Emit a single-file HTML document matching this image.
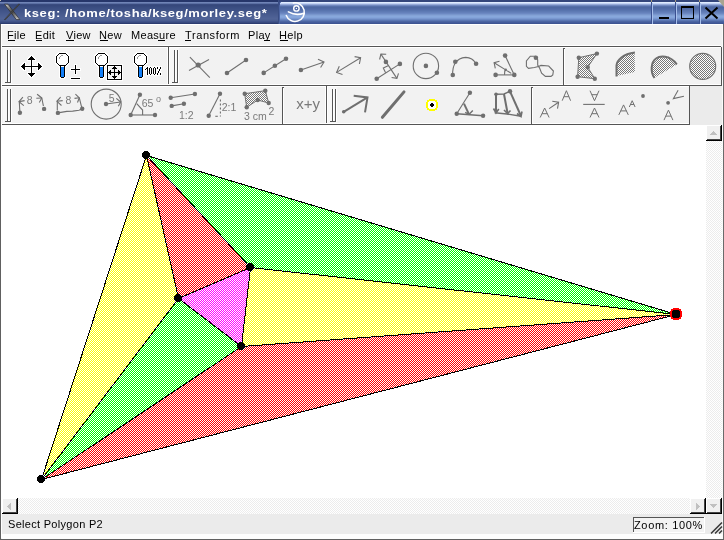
<!DOCTYPE html>
<html><head><meta charset="utf-8">
<style>
html,body{margin:0;padding:0;}
body{width:724px;height:540px;overflow:hidden;position:relative;background:#f2f2f2;font-family:"Liberation Sans",sans-serif;}
svg{position:absolute;left:0;top:0;will-change:transform;}
.t{position:absolute;white-space:nowrap;line-height:1;will-change:transform;}
.menu{font-size:11px;letter-spacing:0.3px;color:#000;top:30px;}
.menu u{text-decoration:none;border-bottom:1px solid #000;}
</style></head><body>
<svg width="724" height="540" viewBox="0 0 724 540" shape-rendering="crispEdges">
<defs>
<linearGradient id="tg" x1="0" y1="0" x2="0" y2="1">
<stop offset="0" stop-color="#6a84ba"/>
<stop offset="0.5" stop-color="#5069a2"/>
<stop offset="1" stop-color="#3b5089"/>
</linearGradient>
<pattern id="pY" x="0" y="0" width="2" height="2" patternUnits="userSpaceOnUse"><rect width="2" height="2" fill="#fff"/><rect x="1" y="0" width="1" height="1" fill="#ff0"/><rect x="0" y="1" width="1" height="1" fill="#ff0"/></pattern>
<pattern id="pR" x="0" y="0" width="2" height="2" patternUnits="userSpaceOnUse"><rect width="2" height="2" fill="#fff"/><rect x="1" y="0" width="1" height="1" fill="#f00"/><rect x="0" y="1" width="1" height="1" fill="#f00"/></pattern>
<pattern id="pG" x="0" y="0" width="2" height="2" patternUnits="userSpaceOnUse"><rect width="2" height="2" fill="#fff"/><rect x="1" y="0" width="1" height="1" fill="#0f0"/><rect x="0" y="1" width="1" height="1" fill="#0f0"/></pattern>
<pattern id="pM" x="0" y="0" width="2" height="2" patternUnits="userSpaceOnUse"><rect width="2" height="2" fill="#fff"/><rect x="1" y="0" width="1" height="1" fill="#f0f"/><rect x="0" y="1" width="1" height="1" fill="#f0f"/></pattern>
<pattern id="pS" x="0" y="0" width="2" height="2" patternUnits="userSpaceOnUse"><rect width="2" height="2" fill="#fff"/><rect x="0" y="0" width="1" height="1" fill="#ececec"/><rect x="1" y="1" width="1" height="1" fill="#ececec"/></pattern>
</defs>
<!-- title bar -->
<linearGradient id="tgL" x1="0" y1="0" x2="0" y2="24" gradientUnits="userSpaceOnUse">
<stop offset="0" stop-color="#26366a"/><stop offset="0.083" stop-color="#26366a"/>
<stop offset="0.084" stop-color="#6c80b4"/><stop offset="0.125" stop-color="#6c80b4"/>
<stop offset="0.126" stop-color="#56699e"/><stop offset="0.17" stop-color="#3e5086"/>
<stop offset="0.5" stop-color="#44588e"/><stop offset="0.8" stop-color="#52679c"/>
<stop offset="0.9" stop-color="#40538a"/><stop offset="0.958" stop-color="#34467a"/>
<stop offset="1" stop-color="#2c3d72"/>
</linearGradient>
<linearGradient id="tgR" x1="0" y1="0" x2="0" y2="24" gradientUnits="userSpaceOnUse">
<stop offset="0" stop-color="#30427a"/><stop offset="0.083" stop-color="#30427a"/>
<stop offset="0.084" stop-color="#d8e6ff"/><stop offset="0.125" stop-color="#d8e6ff"/>
<stop offset="0.17" stop-color="#a8bce8"/><stop offset="0.25" stop-color="#5e78b4"/>
<stop offset="0.33" stop-color="#4e68a4"/><stop offset="0.6" stop-color="#7894cc"/>
<stop offset="0.7" stop-color="#88a8dc"/><stop offset="0.8" stop-color="#6c8cc4"/>
<stop offset="0.9" stop-color="#4a64a0"/><stop offset="1" stop-color="#3e5592"/>
</linearGradient>
<rect x="0" y="0" width="278" height="1" fill="#26366a"/><rect x="0" y="1" width="278" height="1" fill="#26366a"/><rect x="0" y="2" width="278" height="1" fill="#7084b6"/><rect x="0" y="3" width="278" height="1" fill="#5c70a4"/><rect x="0" y="4" width="278" height="1" fill="#3a4c80"/><rect x="0" y="5" width="278" height="1" fill="#36487c"/><rect x="0" y="6" width="278" height="1" fill="#384a7e"/><rect x="0" y="7" width="278" height="1" fill="#3a4d81"/><rect x="0" y="8" width="278" height="1" fill="#3c4f83"/><rect x="0" y="9" width="278" height="1" fill="#3e5185"/><rect x="0" y="10" width="278" height="1" fill="#405387"/><rect x="0" y="11" width="278" height="1" fill="#425589"/><rect x="0" y="12" width="278" height="1" fill="#44578b"/><rect x="0" y="13" width="278" height="1" fill="#46598d"/><rect x="0" y="14" width="278" height="1" fill="#485b8f"/><rect x="0" y="15" width="278" height="1" fill="#4a5d91"/><rect x="0" y="16" width="278" height="1" fill="#4c5f93"/><rect x="0" y="17" width="278" height="1" fill="#4e6195"/><rect x="0" y="18" width="278" height="1" fill="#506396"/><rect x="0" y="19" width="278" height="1" fill="#4e6194"/><rect x="0" y="20" width="278" height="1" fill="#4a5d90"/><rect x="0" y="21" width="278" height="1" fill="#40538a"/><rect x="0" y="22" width="278" height="1" fill="#384a7e"/><rect x="0" y="23" width="278" height="1" fill="#2c3c70"/><rect x="279" y="0" width="445" height="1" fill="#34467c"/><rect x="279" y="1" width="445" height="1" fill="#34467c"/><rect x="279" y="2" width="445" height="1" fill="#e0ecff"/><rect x="279" y="3" width="445" height="1" fill="#c4d4f6"/><rect x="279" y="4" width="445" height="1" fill="#96aad8"/><rect x="279" y="5" width="445" height="1" fill="#7088c0"/><rect x="279" y="6" width="445" height="1" fill="#5670aa"/><rect x="279" y="7" width="445" height="1" fill="#4e68a2"/><rect x="279" y="8" width="445" height="1" fill="#506aa6"/><rect x="279" y="9" width="445" height="1" fill="#546eaa"/><rect x="279" y="10" width="445" height="1" fill="#5874ae"/><rect x="279" y="11" width="445" height="1" fill="#5e7ab4"/><rect x="279" y="12" width="445" height="1" fill="#6480ba"/><rect x="279" y="13" width="445" height="1" fill="#6c88c2"/><rect x="279" y="14" width="445" height="1" fill="#7896cc"/><rect x="279" y="15" width="445" height="1" fill="#84a2d6"/><rect x="279" y="16" width="445" height="1" fill="#88a8dc"/><rect x="279" y="17" width="445" height="1" fill="#84a4da"/><rect x="279" y="18" width="445" height="1" fill="#7a98d0"/><rect x="279" y="19" width="445" height="1" fill="#6a88c2"/><rect x="279" y="20" width="445" height="1" fill="#5a76b2"/><rect x="279" y="21" width="445" height="1" fill="#4c66a2"/><rect x="279" y="22" width="445" height="1" fill="#445c9c"/><rect x="279" y="23" width="445" height="1" fill="#3e5592"/>
<rect x="279" y="2" width="1" height="22" fill="#4c64a2"/><rect x="280" y="2" width="1" height="1" fill="#6a82bc"/>
<rect x="278" y="0" width="1" height="24" fill="#3a4e84"/>
<rect x="279" y="2" width="1" height="3" fill="#3e5290"/>
<rect x="0" y="0" width="1" height="1" fill="#c8c0b0"/>
<!-- X logo -->
<g shape-rendering="geometricPrecision">
<linearGradient id="xg" x1="0" y1="0" x2="1" y2="1"><stop offset="0" stop-color="#d8d8d8"/><stop offset="0.5" stop-color="#404040"/><stop offset="1" stop-color="#e0e0e0"/></linearGradient>
<path d="M4.5,4.2 L8,4.2 L19.8,19.6 L16.3,19.6 Z" fill="url(#xg)" stroke="#2a2a2a" stroke-width="0.7"/>
<path d="M19.6,4.2 L18.4,4.2 L4.4,19.6 L5.6,19.6 Z" fill="#606060" stroke="#2a2a2a" stroke-width="0.6"/>
</g>
<!-- KDE logo -->
<g shape-rendering="geometricPrecision" fill="none" stroke="#fff" stroke-linecap="round">
<circle cx="296.4" cy="8.4" r="2.7" stroke-width="1.4"/>
<circle cx="296.4" cy="8.4" r="0.7" fill="#fff" stroke="none"/>
<path d="M293.4,3.0 A9.3,9.3 0 1 1 286.3,15.4" stroke-width="1.5"/>
<path d="M288.4,11.9 Q296,16 304,13.2" stroke-width="1.6"/>
</g>
<!-- title buttons -->
<g>
<rect x="651" y="2" width="1" height="22" fill="#3a5090"/><rect x="652" y="3" width="1" height="21" fill="#a8c0ec"/>
<rect x="675" y="2" width="1" height="22" fill="#3a5090"/><rect x="676" y="3" width="1" height="21" fill="#a8c0ec"/>
<rect x="699" y="2" width="1" height="22" fill="#3a5090"/><rect x="700" y="3" width="1" height="21" fill="#a8c0ec"/>
<rect x="651" y="0" width="1" height="2" fill="#a89c80"/><rect x="675" y="0" width="1" height="2" fill="#a89c80"/><rect x="699" y="0" width="1" height="2" fill="#a89c80"/>
<path d="M718,0 L724,0 L724,7 Z" fill="#a8a490" shape-rendering="geometricPrecision"/>
<rect x="659" y="17" width="10" height="2" fill="#000"/>
<rect x="681" y="6" width="13" height="2" fill="#000"/><rect x="681" y="18" width="13" height="1" fill="#000"/><rect x="681" y="8" width="1" height="10" fill="#000"/><rect x="693" y="8" width="1" height="10" fill="#000"/>
<path d="M705.5,7.5 L717.5,18.5 M717.5,7.5 L705.5,18.5" stroke="#000" stroke-width="2" shape-rendering="geometricPrecision"/>
</g>
<!-- window frame -->
<rect x="0" y="24" width="1" height="516" fill="#606060"/>
<rect x="1" y="24" width="722" height="1" fill="#fff"/>
<rect x="1" y="24" width="1" height="514" fill="#fff"/>
<rect x="723" y="24" width="1" height="516" fill="#6a6a6a"/>
<rect x="722" y="24" width="1" height="515" fill="#fafafa"/>
<rect x="0" y="539" width="724" height="1" fill="#606060"/>
<!-- menu separator / toolbar frames -->
<rect x="2" y="45" width="719" height="1" fill="#fff"/>
<rect x="2" y="46" width="719" height="1" fill="#555"/>
<rect x="2" y="47" width="719" height="1" fill="#fff"/>
<rect x="721" y="47" width="1" height="38" fill="#555"/>
<rect x="168" y="47" width="1" height="38" fill="#555"/>
<rect x="167" y="48" width="1" height="36" fill="#fff"/>
<rect x="169" y="47" width="1" height="38" fill="#fff"/>
<rect x="2" y="84" width="719" height="1" fill="#fff"/>
<rect x="2" y="85" width="720" height="1" fill="#555"/>
<rect x="2" y="86" width="688" height="1" fill="#fff"/>
<rect x="690" y="86" width="32" height="39" fill="#ebebeb"/>
<rect x="326" y="86" width="1" height="38" fill="#555"/>
<rect x="327" y="86" width="1" height="38" fill="#fff"/>
<rect x="325" y="87" width="1" height="36" fill="#fff"/>
<rect x="689" y="86" width="1" height="38" fill="#555"/>
<rect x="2" y="123" width="687" height="1" fill="#fff"/>
<rect x="2" y="124" width="688" height="1" fill="#555"/>
<!-- separators with tick -->
<rect x="563" y="48" width="2" height="1" fill="#555"/><rect x="563" y="48" width="1" height="37" fill="#555"/><rect x="564" y="49" width="1" height="36" fill="#fff"/>
<rect x="282" y="87" width="2" height="1" fill="#555"/><rect x="282" y="87" width="1" height="37" fill="#555"/><rect x="283" y="88" width="1" height="36" fill="#fff"/>
<rect x="531" y="87" width="2" height="1" fill="#555"/><rect x="531" y="87" width="1" height="37" fill="#555"/><rect x="532" y="88" width="1" height="36" fill="#fff"/>
<!-- handles -->
<g fill="#f7f7f7"><rect x="3" y="48" width="9" height="36"/><rect x="170" y="48" width="9" height="36"/><rect x="3" y="87" width="9" height="36"/><rect x="328" y="87" width="9" height="36"/></g>
<g fill="#555">
<rect x="7" y="50" width="1" height="33"/><rect x="10" y="50" width="1" height="33"/><rect x="5" y="82" width="6" height="1"/>
<rect x="174" y="50" width="1" height="33"/><rect x="177" y="50" width="1" height="33"/><rect x="172" y="82" width="6" height="1"/>
<rect x="7" y="89" width="1" height="33"/><rect x="10" y="89" width="1" height="33"/><rect x="5" y="121" width="6" height="1"/>
<rect x="332" y="89" width="1" height="33"/><rect x="335" y="89" width="1" height="33"/><rect x="330" y="121" width="6" height="1"/>
</g>
<g fill="#fff">
<rect x="8" y="50" width="1" height="32"/><rect x="11" y="50" width="1" height="33"/>
<rect x="175" y="50" width="1" height="32"/><rect x="178" y="50" width="1" height="33"/>
<rect x="8" y="89" width="1" height="32"/><rect x="11" y="89" width="1" height="33"/>
<rect x="333" y="89" width="1" height="32"/><rect x="336" y="89" width="1" height="33"/>
</g>
<!-- canvas -->
<rect x="2" y="125" width="704" height="373" fill="#fff"/>
<g shape-rendering="crispEdges" stroke="#000" stroke-width="1">
<polygon points="146.5,155.5 178.5,298.5 41.5,479.5" fill="url(#pY)"/>
<polygon points="146.5,155.5 250.5,267.5 178.5,298.5" fill="url(#pR)"/>
<polygon points="146.5,155.5 676.5,314.5 250.5,267.5" fill="url(#pG)"/>
<polygon points="250.5,267.5 676.5,314.5 241.5,346.5" fill="url(#pY)"/>
<polygon points="241.5,346.5 676.5,314.5 41.5,479.5" fill="url(#pR)"/>
<polygon points="178.5,298.5 241.5,346.5 41.5,479.5" fill="url(#pG)"/>
<polygon points="250.5,267.5 241.5,346.5 178.5,298.5" fill="url(#pM)"/>
</g>
<g fill="#000">
<circle cx="146" cy="155" r="4"/>
<circle cx="41" cy="479" r="4"/>
<circle cx="250" cy="267" r="4"/>
<circle cx="178" cy="298" r="4"/>
<circle cx="241" cy="346" r="4"/>
<path fill="#f00" d="M673,308h6v1h-6zM671,309h10v1h-10zM671,310h10v1h-10zM670,311h12v6h-12zM671,317h10v1h-10zM671,318h10v1h-10zM673,319h6v1h-6z"/>
<path fill="#000" d="M673,310h6v1h-6zM672,311h8v6h-8zM673,317h6v1h-6z"/>
</g>
<!-- scrollbars -->
<rect x="706" y="125" width="16" height="389" fill="url(#pS)"/>
<rect x="2" y="498" width="704" height="16" fill="url(#pS)"/>
<g id="btns">
<!-- up -->
<rect x="706" y="125" width="16" height="16" fill="#fff"/><rect x="707" y="126" width="13" height="13" fill="#f0f0f0"/>
<rect x="721" y="125" width="1" height="16" fill="#000"/><rect x="720" y="126" width="1" height="14" fill="#444"/>
<rect x="706" y="140" width="16" height="1" fill="#000"/><rect x="707" y="139" width="14" height="1" fill="#444"/>
<path fill="#c0c0c0" d="M713,131h1v1h-1zM712,132h3v1h-3zM711,133h5v1h-5zM710,134h7v1h-7z"/>
<!-- left -->
<rect x="2" y="498" width="16" height="16" fill="#fff"/><rect x="3" y="499" width="13" height="13" fill="#f0f0f0"/>
<rect x="17" y="498" width="1" height="16" fill="#000"/><rect x="16" y="499" width="1" height="14" fill="#444"/>
<rect x="2" y="513" width="16" height="1" fill="#000"/><rect x="3" y="512" width="14" height="1" fill="#444"/>
<path fill="#c0c0c0" d="M7,506h1v1h-1zM8,505h1v3h-1zM9,504h1v5h-1zM10,503h1v7h-1z"/>
<!-- right -->
<rect x="690" y="498" width="16" height="16" fill="#fff"/><rect x="691" y="499" width="13" height="13" fill="#f0f0f0"/>
<rect x="705" y="498" width="1" height="16" fill="#000"/><rect x="704" y="499" width="1" height="14" fill="#444"/>
<rect x="690" y="513" width="16" height="1" fill="#000"/><rect x="691" y="512" width="14" height="1" fill="#444"/>
<path fill="#c0c0c0" d="M696,503h1v7h-1zM697,504h1v5h-1zM698,505h1v3h-1zM699,506h1v1h-1z"/>
<!-- down -->
<rect x="706" y="498" width="16" height="16" fill="#fff"/><rect x="707" y="499" width="13" height="13" fill="#f0f0f0"/>
<rect x="721" y="498" width="1" height="16" fill="#000"/><rect x="720" y="499" width="1" height="14" fill="#444"/>
<rect x="706" y="513" width="16" height="1" fill="#000"/><rect x="707" y="512" width="14" height="1" fill="#444"/>
<path fill="#c0c0c0" d="M710,504h7v1h-7zM711,505h5v1h-5zM712,506h3v1h-3zM713,507h1v1h-1z"/>
</g>
<!-- status bar -->
<rect x="2" y="514" width="720" height="20" fill="#ebebeb"/>
<rect x="2" y="534" width="720" height="5" fill="#fdfdfd"/>
<rect x="633" y="517" width="71" height="15" fill="#f3f3f3"/>
<rect x="633" y="517" width="71" height="1" fill="#555"/>
<rect x="633" y="517" width="1" height="15" fill="#555"/>
<rect x="704" y="517" width="1" height="16" fill="#fff"/>
<rect x="633" y="532" width="72" height="1" fill="#fff"/>
<!-- size grip -->
<g shape-rendering="geometricPrecision" stroke-linecap="butt">
<path d="M711,533.5 L722,522.5 M715,533.5 L722,526.5 M719,533.5 L722,530.5" stroke="#fff" stroke-width="1.2" transform="translate(-0.8,0.8)"/>
<path d="M711,533.5 L722,522.5 M715,533.5 L722,526.5 M719,533.5 L722,530.5" stroke="#3a3a3a" stroke-width="1.6"/>
</g>
<!--UL--><g fill="#000"><rect x="8" y="40" width="7" height="1"/><rect x="36" y="40" width="6" height="1"/><rect x="66" y="40" width="8" height="1"/><rect x="100" y="40" width="8" height="1"/><rect x="158" y="40" width="7" height="1"/><rect x="185" y="40" width="6" height="1"/><rect x="264" y="40" width="6" height="1"/><rect x="280" y="40" width="8" height="1"/></g>
<!--ICONS-->
<path fill="#fff" d="M20,65h1v1h-1zM20,66h1v1h-1zM20,67h1v1h-1zM21,64h1v1h-1zM21,65h1v1h-1zM21,67h1v1h-1zM21,68h1v1h-1zM22,63h1v1h-1zM22,64h1v1h-1zM22,68h1v1h-1zM22,69h1v1h-1zM23,62h1v1h-1zM23,63h1v1h-1zM23,69h1v1h-1zM23,70h1v1h-1zM24,62h1v1h-1zM24,70h1v1h-1zM25,62h1v1h-1zM25,63h1v1h-1zM25,64h1v1h-1zM25,65h1v1h-1zM25,67h1v1h-1zM25,68h1v1h-1zM25,69h1v1h-1zM25,70h1v1h-1zM26,65h1v1h-1zM26,67h1v1h-1zM27,58h1v1h-1zM27,59h1v1h-1zM27,60h1v1h-1zM27,65h1v1h-1zM27,67h1v1h-1zM27,72h1v1h-1zM27,73h1v1h-1zM27,74h1v1h-1zM28,57h1v1h-1zM28,58h1v1h-1zM28,60h1v1h-1zM28,65h1v1h-1zM28,67h1v1h-1zM28,72h1v1h-1zM28,74h1v1h-1zM28,75h1v1h-1zM29,56h1v1h-1zM29,57h1v1h-1zM29,60h1v1h-1zM29,65h1v1h-1zM29,67h1v1h-1zM29,72h1v1h-1zM29,75h1v1h-1zM29,76h1v1h-1zM30,55h1v1h-1zM30,56h1v1h-1zM30,60h1v1h-1zM30,61h1v1h-1zM30,62h1v1h-1zM30,63h1v1h-1zM30,64h1v1h-1zM30,65h1v1h-1zM30,67h1v1h-1zM30,68h1v1h-1zM30,69h1v1h-1zM30,70h1v1h-1zM30,71h1v1h-1zM30,72h1v1h-1zM30,76h1v1h-1zM30,77h1v1h-1zM31,55h1v1h-1zM31,77h1v1h-1zM32,55h1v1h-1zM32,56h1v1h-1zM32,60h1v1h-1zM32,61h1v1h-1zM32,62h1v1h-1zM32,63h1v1h-1zM32,64h1v1h-1zM32,65h1v1h-1zM32,67h1v1h-1zM32,68h1v1h-1zM32,69h1v1h-1zM32,70h1v1h-1zM32,71h1v1h-1zM32,72h1v1h-1zM32,76h1v1h-1zM32,77h1v1h-1zM33,56h1v1h-1zM33,57h1v1h-1zM33,60h1v1h-1zM33,65h1v1h-1zM33,67h1v1h-1zM33,72h1v1h-1zM33,75h1v1h-1zM33,76h1v1h-1zM34,57h1v1h-1zM34,58h1v1h-1zM34,60h1v1h-1zM34,65h1v1h-1zM34,67h1v1h-1zM34,72h1v1h-1zM34,74h1v1h-1zM34,75h1v1h-1zM35,58h1v1h-1zM35,59h1v1h-1zM35,60h1v1h-1zM35,65h1v1h-1zM35,67h1v1h-1zM35,72h1v1h-1zM35,73h1v1h-1zM35,74h1v1h-1zM36,65h1v1h-1zM36,67h1v1h-1zM37,62h1v1h-1zM37,63h1v1h-1zM37,64h1v1h-1zM37,65h1v1h-1zM37,67h1v1h-1zM37,68h1v1h-1zM37,69h1v1h-1zM37,70h1v1h-1zM38,62h1v1h-1zM38,70h1v1h-1zM39,62h1v1h-1zM39,63h1v1h-1zM39,69h1v1h-1zM39,70h1v1h-1zM40,63h1v1h-1zM40,64h1v1h-1zM40,68h1v1h-1zM40,69h1v1h-1zM41,64h1v1h-1zM41,65h1v1h-1zM41,67h1v1h-1zM41,68h1v1h-1zM42,65h1v1h-1zM42,66h1v1h-1zM42,67h1v1h-1z"/><path fill="#000" d="M21,66h1v1h-1zM22,65h1v1h-1zM22,66h1v1h-1zM22,67h1v1h-1zM23,64h1v1h-1zM23,65h1v1h-1zM23,66h1v1h-1zM23,67h1v1h-1zM23,68h1v1h-1zM24,63h1v1h-1zM24,64h1v1h-1zM24,65h1v1h-1zM24,66h1v1h-1zM24,67h1v1h-1zM24,68h1v1h-1zM24,69h1v1h-1zM25,66h1v1h-1zM26,66h1v1h-1zM27,66h1v1h-1zM28,59h1v1h-1zM28,66h1v1h-1zM28,73h1v1h-1zM29,58h1v1h-1zM29,59h1v1h-1zM29,66h1v1h-1zM29,73h1v1h-1zM29,74h1v1h-1zM30,57h1v1h-1zM30,58h1v1h-1zM30,59h1v1h-1zM30,66h1v1h-1zM30,73h1v1h-1zM30,74h1v1h-1zM30,75h1v1h-1zM31,56h1v1h-1zM31,57h1v1h-1zM31,58h1v1h-1zM31,59h1v1h-1zM31,60h1v1h-1zM31,61h1v1h-1zM31,62h1v1h-1zM31,63h1v1h-1zM31,64h1v1h-1zM31,65h1v1h-1zM31,66h1v1h-1zM31,67h1v1h-1zM31,68h1v1h-1zM31,69h1v1h-1zM31,70h1v1h-1zM31,71h1v1h-1zM31,72h1v1h-1zM31,73h1v1h-1zM31,74h1v1h-1zM31,75h1v1h-1zM31,76h1v1h-1zM32,57h1v1h-1zM32,58h1v1h-1zM32,59h1v1h-1zM32,66h1v1h-1zM32,73h1v1h-1zM32,74h1v1h-1zM32,75h1v1h-1zM33,58h1v1h-1zM33,59h1v1h-1zM33,66h1v1h-1zM33,73h1v1h-1zM33,74h1v1h-1zM34,59h1v1h-1zM34,66h1v1h-1zM34,73h1v1h-1zM35,66h1v1h-1zM36,66h1v1h-1zM37,66h1v1h-1zM38,63h1v1h-1zM38,64h1v1h-1zM38,65h1v1h-1zM38,66h1v1h-1zM38,67h1v1h-1zM38,68h1v1h-1zM38,69h1v1h-1zM39,64h1v1h-1zM39,65h1v1h-1zM39,66h1v1h-1zM39,67h1v1h-1zM39,68h1v1h-1zM40,65h1v1h-1zM40,66h1v1h-1zM40,67h1v1h-1zM41,66h1v1h-1z"/>
<path fill="#fff" d="M55,55h1v1h-1zM55,56h1v1h-1zM55,57h1v1h-1zM55,58h1v1h-1zM55,59h1v1h-1zM55,60h1v1h-1zM55,61h1v1h-1zM55,62h1v1h-1zM55,63h1v1h-1zM56,54h1v1h-1zM56,55h1v1h-1zM56,63h1v1h-1zM56,64h1v1h-1zM57,53h1v1h-1zM57,54h1v1h-1zM57,56h1v1h-1zM57,57h1v1h-1zM57,58h1v1h-1zM57,59h1v1h-1zM57,60h1v1h-1zM57,61h1v1h-1zM57,62h1v1h-1zM57,64h1v1h-1zM57,65h1v1h-1zM58,52h1v1h-1zM58,53h1v1h-1zM58,55h1v1h-1zM58,56h1v1h-1zM58,62h1v1h-1zM58,63h1v1h-1zM58,65h1v1h-1zM58,66h1v1h-1zM59,52h1v1h-1zM59,54h1v1h-1zM59,55h1v1h-1zM59,63h1v1h-1zM59,64h1v1h-1zM59,66h1v1h-1zM59,67h1v1h-1zM59,68h1v1h-1zM59,69h1v1h-1zM59,70h1v1h-1zM59,71h1v1h-1zM59,72h1v1h-1zM59,73h1v1h-1zM59,74h1v1h-1zM59,75h1v1h-1zM59,76h1v1h-1zM59,77h1v1h-1zM60,52h1v1h-1zM60,54h1v1h-1zM60,64h1v1h-1zM60,77h1v1h-1zM60,78h1v1h-1zM61,52h1v1h-1zM61,54h1v1h-1zM61,64h1v1h-1zM61,66h1v1h-1zM61,67h1v1h-1zM61,68h1v1h-1zM61,69h1v1h-1zM61,70h1v1h-1zM61,71h1v1h-1zM61,72h1v1h-1zM61,73h1v1h-1zM61,74h1v1h-1zM61,75h1v1h-1zM61,76h1v1h-1zM61,78h1v1h-1zM62,52h1v1h-1zM62,54h1v1h-1zM62,64h1v1h-1zM62,66h1v1h-1zM62,76h1v1h-1zM62,78h1v1h-1zM63,52h1v1h-1zM63,54h1v1h-1zM63,64h1v1h-1zM63,66h1v1h-1zM63,67h1v1h-1zM63,68h1v1h-1zM63,69h1v1h-1zM63,70h1v1h-1zM63,71h1v1h-1zM63,72h1v1h-1zM63,73h1v1h-1zM63,74h1v1h-1zM63,75h1v1h-1zM63,76h1v1h-1zM63,78h1v1h-1zM64,52h1v1h-1zM64,54h1v1h-1zM64,64h1v1h-1zM64,77h1v1h-1zM64,78h1v1h-1zM65,52h1v1h-1zM65,54h1v1h-1zM65,55h1v1h-1zM65,63h1v1h-1zM65,64h1v1h-1zM65,66h1v1h-1zM65,67h1v1h-1zM65,68h1v1h-1zM65,69h1v1h-1zM65,70h1v1h-1zM65,71h1v1h-1zM65,72h1v1h-1zM65,73h1v1h-1zM65,74h1v1h-1zM65,75h1v1h-1zM65,76h1v1h-1zM65,77h1v1h-1zM66,52h1v1h-1zM66,53h1v1h-1zM66,55h1v1h-1zM66,56h1v1h-1zM66,62h1v1h-1zM66,63h1v1h-1zM66,65h1v1h-1zM66,66h1v1h-1zM67,53h1v1h-1zM67,54h1v1h-1zM67,56h1v1h-1zM67,57h1v1h-1zM67,58h1v1h-1zM67,59h1v1h-1zM67,60h1v1h-1zM67,61h1v1h-1zM67,62h1v1h-1zM67,64h1v1h-1zM67,65h1v1h-1zM68,54h1v1h-1zM68,55h1v1h-1zM68,63h1v1h-1zM68,64h1v1h-1zM69,55h1v1h-1zM69,56h1v1h-1zM69,57h1v1h-1zM69,58h1v1h-1zM69,59h1v1h-1zM69,60h1v1h-1zM69,61h1v1h-1zM69,62h1v1h-1zM69,63h1v1h-1z"/>
<rect x="57" y="54" width="11" height="11" fill="#fff"/><rect x="56" y="56" width="13" height="7" fill="#fff"/><rect x="59" y="53" width="7" height="13" fill="#fff"/>
<rect x="61" y="67" width="3" height="10" fill="#1480f8"/><rect x="61" y="66" width="3" height="1" fill="#fff"/>
<path fill="#000" d="M56,56h1v1h-1zM56,57h1v1h-1zM56,58h1v1h-1zM56,59h1v1h-1zM56,60h1v1h-1zM56,61h1v1h-1zM56,62h1v1h-1zM57,55h1v1h-1zM57,63h1v1h-1zM58,54h1v1h-1zM58,64h1v1h-1zM59,53h1v1h-1zM59,65h1v1h-1zM60,53h1v1h-1zM60,65h1v1h-1zM60,66h1v1h-1zM60,67h1v1h-1zM60,68h1v1h-1zM60,69h1v1h-1zM60,70h1v1h-1zM60,71h1v1h-1zM60,72h1v1h-1zM60,73h1v1h-1zM60,74h1v1h-1zM60,75h1v1h-1zM60,76h1v1h-1zM61,53h1v1h-1zM61,65h1v1h-1zM61,77h1v1h-1zM62,53h1v1h-1zM62,65h1v1h-1zM62,77h1v1h-1zM63,53h1v1h-1zM63,65h1v1h-1zM63,77h1v1h-1zM64,53h1v1h-1zM64,65h1v1h-1zM64,66h1v1h-1zM64,67h1v1h-1zM64,68h1v1h-1zM64,69h1v1h-1zM64,70h1v1h-1zM64,71h1v1h-1zM64,72h1v1h-1zM64,73h1v1h-1zM64,74h1v1h-1zM64,75h1v1h-1zM64,76h1v1h-1zM65,53h1v1h-1zM65,65h1v1h-1zM66,54h1v1h-1zM66,64h1v1h-1zM67,55h1v1h-1zM67,63h1v1h-1zM68,56h1v1h-1zM68,57h1v1h-1zM68,58h1v1h-1zM68,59h1v1h-1zM68,60h1v1h-1zM68,61h1v1h-1zM68,62h1v1h-1z"/>
<path fill="#999" d="M61,55h2v1h-2zM60,56h1v1h-1zM59,57h1v2h-1z"/>
<path fill="#fff" d="M94,55h1v1h-1zM94,56h1v1h-1zM94,57h1v1h-1zM94,58h1v1h-1zM94,59h1v1h-1zM94,60h1v1h-1zM94,61h1v1h-1zM94,62h1v1h-1zM94,63h1v1h-1zM95,54h1v1h-1zM95,55h1v1h-1zM95,63h1v1h-1zM95,64h1v1h-1zM96,53h1v1h-1zM96,54h1v1h-1zM96,56h1v1h-1zM96,57h1v1h-1zM96,58h1v1h-1zM96,59h1v1h-1zM96,60h1v1h-1zM96,61h1v1h-1zM96,62h1v1h-1zM96,64h1v1h-1zM96,65h1v1h-1zM97,52h1v1h-1zM97,53h1v1h-1zM97,55h1v1h-1zM97,56h1v1h-1zM97,62h1v1h-1zM97,63h1v1h-1zM97,65h1v1h-1zM97,66h1v1h-1zM98,52h1v1h-1zM98,54h1v1h-1zM98,55h1v1h-1zM98,63h1v1h-1zM98,64h1v1h-1zM98,66h1v1h-1zM98,67h1v1h-1zM98,68h1v1h-1zM98,69h1v1h-1zM98,70h1v1h-1zM98,71h1v1h-1zM98,72h1v1h-1zM98,73h1v1h-1zM98,74h1v1h-1zM98,75h1v1h-1zM98,76h1v1h-1zM98,77h1v1h-1zM99,52h1v1h-1zM99,54h1v1h-1zM99,64h1v1h-1zM99,77h1v1h-1zM99,78h1v1h-1zM100,52h1v1h-1zM100,54h1v1h-1zM100,64h1v1h-1zM100,66h1v1h-1zM100,67h1v1h-1zM100,68h1v1h-1zM100,69h1v1h-1zM100,70h1v1h-1zM100,71h1v1h-1zM100,72h1v1h-1zM100,73h1v1h-1zM100,74h1v1h-1zM100,75h1v1h-1zM100,76h1v1h-1zM100,78h1v1h-1zM101,52h1v1h-1zM101,54h1v1h-1zM101,64h1v1h-1zM101,66h1v1h-1zM101,76h1v1h-1zM101,78h1v1h-1zM102,52h1v1h-1zM102,54h1v1h-1zM102,64h1v1h-1zM102,66h1v1h-1zM102,67h1v1h-1zM102,68h1v1h-1zM102,69h1v1h-1zM102,70h1v1h-1zM102,71h1v1h-1zM102,72h1v1h-1zM102,73h1v1h-1zM102,74h1v1h-1zM102,75h1v1h-1zM102,76h1v1h-1zM102,78h1v1h-1zM103,52h1v1h-1zM103,54h1v1h-1zM103,64h1v1h-1zM103,77h1v1h-1zM103,78h1v1h-1zM104,52h1v1h-1zM104,54h1v1h-1zM104,55h1v1h-1zM104,63h1v1h-1zM104,64h1v1h-1zM104,66h1v1h-1zM104,67h1v1h-1zM104,68h1v1h-1zM104,69h1v1h-1zM104,70h1v1h-1zM104,71h1v1h-1zM104,72h1v1h-1zM104,73h1v1h-1zM104,74h1v1h-1zM104,75h1v1h-1zM104,76h1v1h-1zM104,77h1v1h-1zM105,52h1v1h-1zM105,53h1v1h-1zM105,55h1v1h-1zM105,56h1v1h-1zM105,62h1v1h-1zM105,63h1v1h-1zM105,65h1v1h-1zM105,66h1v1h-1zM106,53h1v1h-1zM106,54h1v1h-1zM106,56h1v1h-1zM106,57h1v1h-1zM106,58h1v1h-1zM106,59h1v1h-1zM106,60h1v1h-1zM106,61h1v1h-1zM106,62h1v1h-1zM106,64h1v1h-1zM106,65h1v1h-1zM107,54h1v1h-1zM107,55h1v1h-1zM107,63h1v1h-1zM107,64h1v1h-1zM108,55h1v1h-1zM108,56h1v1h-1zM108,57h1v1h-1zM108,58h1v1h-1zM108,59h1v1h-1zM108,60h1v1h-1zM108,61h1v1h-1zM108,62h1v1h-1zM108,63h1v1h-1z"/>
<rect x="96" y="54" width="11" height="11" fill="#fff"/><rect x="95" y="56" width="13" height="7" fill="#fff"/><rect x="98" y="53" width="7" height="13" fill="#fff"/>
<rect x="100" y="67" width="3" height="10" fill="#1480f8"/><rect x="100" y="66" width="3" height="1" fill="#fff"/>
<path fill="#000" d="M95,56h1v1h-1zM95,57h1v1h-1zM95,58h1v1h-1zM95,59h1v1h-1zM95,60h1v1h-1zM95,61h1v1h-1zM95,62h1v1h-1zM96,55h1v1h-1zM96,63h1v1h-1zM97,54h1v1h-1zM97,64h1v1h-1zM98,53h1v1h-1zM98,65h1v1h-1zM99,53h1v1h-1zM99,65h1v1h-1zM99,66h1v1h-1zM99,67h1v1h-1zM99,68h1v1h-1zM99,69h1v1h-1zM99,70h1v1h-1zM99,71h1v1h-1zM99,72h1v1h-1zM99,73h1v1h-1zM99,74h1v1h-1zM99,75h1v1h-1zM99,76h1v1h-1zM100,53h1v1h-1zM100,65h1v1h-1zM100,77h1v1h-1zM101,53h1v1h-1zM101,65h1v1h-1zM101,77h1v1h-1zM102,53h1v1h-1zM102,65h1v1h-1zM102,77h1v1h-1zM103,53h1v1h-1zM103,65h1v1h-1zM103,66h1v1h-1zM103,67h1v1h-1zM103,68h1v1h-1zM103,69h1v1h-1zM103,70h1v1h-1zM103,71h1v1h-1zM103,72h1v1h-1zM103,73h1v1h-1zM103,74h1v1h-1zM103,75h1v1h-1zM103,76h1v1h-1zM104,53h1v1h-1zM104,65h1v1h-1zM105,54h1v1h-1zM105,64h1v1h-1zM106,55h1v1h-1zM106,63h1v1h-1zM107,56h1v1h-1zM107,57h1v1h-1zM107,58h1v1h-1zM107,59h1v1h-1zM107,60h1v1h-1zM107,61h1v1h-1zM107,62h1v1h-1z"/>
<path fill="#999" d="M100,55h2v1h-2zM99,56h1v1h-1zM98,57h1v2h-1z"/>
<path fill="#fff" d="M133,55h1v1h-1zM133,56h1v1h-1zM133,57h1v1h-1zM133,58h1v1h-1zM133,59h1v1h-1zM133,60h1v1h-1zM133,61h1v1h-1zM133,62h1v1h-1zM133,63h1v1h-1zM134,54h1v1h-1zM134,55h1v1h-1zM134,63h1v1h-1zM134,64h1v1h-1zM135,53h1v1h-1zM135,54h1v1h-1zM135,56h1v1h-1zM135,57h1v1h-1zM135,58h1v1h-1zM135,59h1v1h-1zM135,60h1v1h-1zM135,61h1v1h-1zM135,62h1v1h-1zM135,64h1v1h-1zM135,65h1v1h-1zM136,52h1v1h-1zM136,53h1v1h-1zM136,55h1v1h-1zM136,56h1v1h-1zM136,62h1v1h-1zM136,63h1v1h-1zM136,65h1v1h-1zM136,66h1v1h-1zM137,52h1v1h-1zM137,54h1v1h-1zM137,55h1v1h-1zM137,63h1v1h-1zM137,64h1v1h-1zM137,66h1v1h-1zM137,67h1v1h-1zM137,68h1v1h-1zM137,69h1v1h-1zM137,70h1v1h-1zM137,71h1v1h-1zM137,72h1v1h-1zM137,73h1v1h-1zM137,74h1v1h-1zM137,75h1v1h-1zM137,76h1v1h-1zM137,77h1v1h-1zM138,52h1v1h-1zM138,54h1v1h-1zM138,64h1v1h-1zM138,77h1v1h-1zM138,78h1v1h-1zM139,52h1v1h-1zM139,54h1v1h-1zM139,64h1v1h-1zM139,66h1v1h-1zM139,67h1v1h-1zM139,68h1v1h-1zM139,69h1v1h-1zM139,70h1v1h-1zM139,71h1v1h-1zM139,72h1v1h-1zM139,73h1v1h-1zM139,74h1v1h-1zM139,75h1v1h-1zM139,76h1v1h-1zM139,78h1v1h-1zM140,52h1v1h-1zM140,54h1v1h-1zM140,64h1v1h-1zM140,66h1v1h-1zM140,76h1v1h-1zM140,78h1v1h-1zM141,52h1v1h-1zM141,54h1v1h-1zM141,64h1v1h-1zM141,66h1v1h-1zM141,67h1v1h-1zM141,68h1v1h-1zM141,69h1v1h-1zM141,70h1v1h-1zM141,71h1v1h-1zM141,72h1v1h-1zM141,73h1v1h-1zM141,74h1v1h-1zM141,75h1v1h-1zM141,76h1v1h-1zM141,78h1v1h-1zM142,52h1v1h-1zM142,54h1v1h-1zM142,64h1v1h-1zM142,77h1v1h-1zM142,78h1v1h-1zM143,52h1v1h-1zM143,54h1v1h-1zM143,55h1v1h-1zM143,63h1v1h-1zM143,64h1v1h-1zM143,66h1v1h-1zM143,67h1v1h-1zM143,68h1v1h-1zM143,69h1v1h-1zM143,70h1v1h-1zM143,71h1v1h-1zM143,72h1v1h-1zM143,73h1v1h-1zM143,74h1v1h-1zM143,75h1v1h-1zM143,76h1v1h-1zM143,77h1v1h-1zM144,52h1v1h-1zM144,53h1v1h-1zM144,55h1v1h-1zM144,56h1v1h-1zM144,62h1v1h-1zM144,63h1v1h-1zM144,65h1v1h-1zM144,66h1v1h-1zM145,53h1v1h-1zM145,54h1v1h-1zM145,56h1v1h-1zM145,57h1v1h-1zM145,58h1v1h-1zM145,59h1v1h-1zM145,60h1v1h-1zM145,61h1v1h-1zM145,62h1v1h-1zM145,64h1v1h-1zM145,65h1v1h-1zM146,54h1v1h-1zM146,55h1v1h-1zM146,63h1v1h-1zM146,64h1v1h-1zM147,55h1v1h-1zM147,56h1v1h-1zM147,57h1v1h-1zM147,58h1v1h-1zM147,59h1v1h-1zM147,60h1v1h-1zM147,61h1v1h-1zM147,62h1v1h-1zM147,63h1v1h-1z"/>
<rect x="135" y="54" width="11" height="11" fill="#fff"/><rect x="134" y="56" width="13" height="7" fill="#fff"/><rect x="137" y="53" width="7" height="13" fill="#fff"/>
<rect x="139" y="67" width="3" height="10" fill="#1480f8"/><rect x="139" y="66" width="3" height="1" fill="#fff"/>
<path fill="#000" d="M134,56h1v1h-1zM134,57h1v1h-1zM134,58h1v1h-1zM134,59h1v1h-1zM134,60h1v1h-1zM134,61h1v1h-1zM134,62h1v1h-1zM135,55h1v1h-1zM135,63h1v1h-1zM136,54h1v1h-1zM136,64h1v1h-1zM137,53h1v1h-1zM137,65h1v1h-1zM138,53h1v1h-1zM138,65h1v1h-1zM138,66h1v1h-1zM138,67h1v1h-1zM138,68h1v1h-1zM138,69h1v1h-1zM138,70h1v1h-1zM138,71h1v1h-1zM138,72h1v1h-1zM138,73h1v1h-1zM138,74h1v1h-1zM138,75h1v1h-1zM138,76h1v1h-1zM139,53h1v1h-1zM139,65h1v1h-1zM139,77h1v1h-1zM140,53h1v1h-1zM140,65h1v1h-1zM140,77h1v1h-1zM141,53h1v1h-1zM141,65h1v1h-1zM141,77h1v1h-1zM142,53h1v1h-1zM142,65h1v1h-1zM142,66h1v1h-1zM142,67h1v1h-1zM142,68h1v1h-1zM142,69h1v1h-1zM142,70h1v1h-1zM142,71h1v1h-1zM142,72h1v1h-1zM142,73h1v1h-1zM142,74h1v1h-1zM142,75h1v1h-1zM142,76h1v1h-1zM143,53h1v1h-1zM143,65h1v1h-1zM144,54h1v1h-1zM144,64h1v1h-1zM145,55h1v1h-1zM145,63h1v1h-1zM146,56h1v1h-1zM146,57h1v1h-1zM146,58h1v1h-1zM146,59h1v1h-1zM146,60h1v1h-1zM146,61h1v1h-1zM146,62h1v1h-1z"/>
<path fill="#999" d="M139,55h2v1h-2zM138,56h1v1h-1zM137,57h1v2h-1z"/>
<path fill="#fff" d="M70,68h1v1h-1zM70,69h1v1h-1zM70,70h1v1h-1zM70,77h1v1h-1zM70,78h1v1h-1zM70,79h1v1h-1zM71,68h1v1h-1zM71,70h1v1h-1zM71,77h1v1h-1zM71,79h1v1h-1zM72,68h1v1h-1zM72,70h1v1h-1zM72,77h1v1h-1zM72,79h1v1h-1zM73,68h1v1h-1zM73,70h1v1h-1zM73,77h1v1h-1zM73,79h1v1h-1zM74,64h1v1h-1zM74,65h1v1h-1zM74,66h1v1h-1zM74,67h1v1h-1zM74,68h1v1h-1zM74,70h1v1h-1zM74,71h1v1h-1zM74,72h1v1h-1zM74,73h1v1h-1zM74,74h1v1h-1zM74,77h1v1h-1zM74,79h1v1h-1zM75,64h1v1h-1zM75,74h1v1h-1zM75,77h1v1h-1zM75,79h1v1h-1zM76,64h1v1h-1zM76,65h1v1h-1zM76,66h1v1h-1zM76,67h1v1h-1zM76,68h1v1h-1zM76,70h1v1h-1zM76,71h1v1h-1zM76,72h1v1h-1zM76,73h1v1h-1zM76,74h1v1h-1zM76,77h1v1h-1zM76,79h1v1h-1zM77,68h1v1h-1zM77,70h1v1h-1zM77,77h1v1h-1zM77,79h1v1h-1zM78,68h1v1h-1zM78,70h1v1h-1zM78,77h1v1h-1zM78,79h1v1h-1zM79,68h1v1h-1zM79,70h1v1h-1zM79,77h1v1h-1zM79,79h1v1h-1zM80,68h1v1h-1zM80,69h1v1h-1zM80,70h1v1h-1zM80,77h1v1h-1zM80,78h1v1h-1zM80,79h1v1h-1z"/><path fill="#000" d="M71,69h1v1h-1zM71,78h1v1h-1zM72,69h1v1h-1zM72,78h1v1h-1zM73,69h1v1h-1zM73,78h1v1h-1zM74,69h1v1h-1zM74,78h1v1h-1zM75,65h1v1h-1zM75,66h1v1h-1zM75,67h1v1h-1zM75,68h1v1h-1zM75,69h1v1h-1zM75,70h1v1h-1zM75,71h1v1h-1zM75,72h1v1h-1zM75,73h1v1h-1zM75,78h1v1h-1zM76,69h1v1h-1zM76,78h1v1h-1zM77,69h1v1h-1zM77,78h1v1h-1zM78,69h1v1h-1zM78,78h1v1h-1zM79,69h1v1h-1zM79,78h1v1h-1z"/>
<path fill="#fff" d="M106,64h1v1h-1zM106,65h1v1h-1zM106,66h1v1h-1zM106,67h1v1h-1zM106,68h1v1h-1zM106,69h1v1h-1zM106,70h1v1h-1zM106,71h1v1h-1zM106,72h1v1h-1zM106,73h1v1h-1zM106,74h1v1h-1zM106,75h1v1h-1zM106,76h1v1h-1zM106,77h1v1h-1zM106,78h1v1h-1zM106,79h1v1h-1zM106,80h1v1h-1zM107,64h1v1h-1zM107,80h1v1h-1zM108,64h1v1h-1zM108,66h1v1h-1zM108,67h1v1h-1zM108,68h1v1h-1zM108,69h1v1h-1zM108,70h1v1h-1zM108,71h1v1h-1zM108,73h1v1h-1zM108,74h1v1h-1zM108,75h1v1h-1zM108,76h1v1h-1zM108,77h1v1h-1zM108,78h1v1h-1zM108,80h1v1h-1zM109,64h1v1h-1zM109,66h1v1h-1zM109,69h1v1h-1zM109,70h1v1h-1zM109,74h1v1h-1zM109,75h1v1h-1zM109,78h1v1h-1zM109,80h1v1h-1zM110,64h1v1h-1zM110,66h1v1h-1zM110,69h1v1h-1zM110,75h1v1h-1zM110,78h1v1h-1zM110,80h1v1h-1zM111,64h1v1h-1zM111,66h1v1h-1zM111,67h1v1h-1zM111,68h1v1h-1zM111,69h1v1h-1zM111,70h1v1h-1zM111,71h1v1h-1zM111,73h1v1h-1zM111,74h1v1h-1zM111,75h1v1h-1zM111,76h1v1h-1zM111,77h1v1h-1zM111,78h1v1h-1zM111,80h1v1h-1zM112,64h1v1h-1zM112,66h1v1h-1zM112,67h1v1h-1zM112,69h1v1h-1zM112,71h1v1h-1zM112,73h1v1h-1zM112,75h1v1h-1zM112,77h1v1h-1zM112,78h1v1h-1zM112,80h1v1h-1zM113,64h1v1h-1zM113,66h1v1h-1zM113,69h1v1h-1zM113,70h1v1h-1zM113,71h1v1h-1zM113,73h1v1h-1zM113,74h1v1h-1zM113,75h1v1h-1zM113,78h1v1h-1zM113,80h1v1h-1zM114,64h1v1h-1zM114,80h1v1h-1zM115,64h1v1h-1zM115,66h1v1h-1zM115,69h1v1h-1zM115,70h1v1h-1zM115,71h1v1h-1zM115,73h1v1h-1zM115,74h1v1h-1zM115,75h1v1h-1zM115,78h1v1h-1zM115,80h1v1h-1zM116,64h1v1h-1zM116,66h1v1h-1zM116,67h1v1h-1zM116,69h1v1h-1zM116,71h1v1h-1zM116,73h1v1h-1zM116,75h1v1h-1zM116,77h1v1h-1zM116,78h1v1h-1zM116,80h1v1h-1zM117,64h1v1h-1zM117,66h1v1h-1zM117,67h1v1h-1zM117,68h1v1h-1zM117,69h1v1h-1zM117,70h1v1h-1zM117,71h1v1h-1zM117,73h1v1h-1zM117,74h1v1h-1zM117,75h1v1h-1zM117,76h1v1h-1zM117,77h1v1h-1zM117,78h1v1h-1zM117,80h1v1h-1zM118,64h1v1h-1zM118,66h1v1h-1zM118,69h1v1h-1zM118,75h1v1h-1zM118,78h1v1h-1zM118,80h1v1h-1zM119,64h1v1h-1zM119,66h1v1h-1zM119,69h1v1h-1zM119,70h1v1h-1zM119,74h1v1h-1zM119,75h1v1h-1zM119,78h1v1h-1zM119,80h1v1h-1zM120,64h1v1h-1zM120,66h1v1h-1zM120,67h1v1h-1zM120,68h1v1h-1zM120,69h1v1h-1zM120,70h1v1h-1zM120,71h1v1h-1zM120,73h1v1h-1zM120,74h1v1h-1zM120,75h1v1h-1zM120,76h1v1h-1zM120,77h1v1h-1zM120,78h1v1h-1zM120,80h1v1h-1zM121,64h1v1h-1zM121,80h1v1h-1zM122,64h1v1h-1zM122,65h1v1h-1zM122,66h1v1h-1zM122,67h1v1h-1zM122,68h1v1h-1zM122,69h1v1h-1zM122,70h1v1h-1zM122,71h1v1h-1zM122,72h1v1h-1zM122,73h1v1h-1zM122,74h1v1h-1zM122,75h1v1h-1zM122,76h1v1h-1zM122,77h1v1h-1zM122,78h1v1h-1zM122,79h1v1h-1zM122,80h1v1h-1z"/><rect x="108" y="66" width="13" height="13" fill="#fff"/><rect x="109" y="67" width="11" height="11" fill="#f2f2f2"/>
<path fill="#000" d="M107,65h1v1h-1zM107,66h1v1h-1zM107,67h1v1h-1zM107,68h1v1h-1zM107,69h1v1h-1zM107,70h1v1h-1zM107,71h1v1h-1zM107,72h1v1h-1zM107,73h1v1h-1zM107,74h1v1h-1zM107,75h1v1h-1zM107,76h1v1h-1zM107,77h1v1h-1zM107,78h1v1h-1zM107,79h1v1h-1zM108,65h1v1h-1zM108,72h1v1h-1zM108,79h1v1h-1zM109,65h1v1h-1zM109,71h1v1h-1zM109,72h1v1h-1zM109,73h1v1h-1zM109,79h1v1h-1zM110,65h1v1h-1zM110,70h1v1h-1zM110,71h1v1h-1zM110,72h1v1h-1zM110,73h1v1h-1zM110,74h1v1h-1zM110,79h1v1h-1zM111,65h1v1h-1zM111,72h1v1h-1zM111,79h1v1h-1zM112,65h1v1h-1zM112,68h1v1h-1zM112,72h1v1h-1zM112,76h1v1h-1zM112,79h1v1h-1zM113,65h1v1h-1zM113,67h1v1h-1zM113,68h1v1h-1zM113,72h1v1h-1zM113,76h1v1h-1zM113,77h1v1h-1zM113,79h1v1h-1zM114,65h1v1h-1zM114,66h1v1h-1zM114,67h1v1h-1zM114,68h1v1h-1zM114,69h1v1h-1zM114,70h1v1h-1zM114,71h1v1h-1zM114,72h1v1h-1zM114,73h1v1h-1zM114,74h1v1h-1zM114,75h1v1h-1zM114,76h1v1h-1zM114,77h1v1h-1zM114,78h1v1h-1zM114,79h1v1h-1zM115,65h1v1h-1zM115,67h1v1h-1zM115,68h1v1h-1zM115,72h1v1h-1zM115,76h1v1h-1zM115,77h1v1h-1zM115,79h1v1h-1zM116,65h1v1h-1zM116,68h1v1h-1zM116,72h1v1h-1zM116,76h1v1h-1zM116,79h1v1h-1zM117,65h1v1h-1zM117,72h1v1h-1zM117,79h1v1h-1zM118,65h1v1h-1zM118,70h1v1h-1zM118,71h1v1h-1zM118,72h1v1h-1zM118,73h1v1h-1zM118,74h1v1h-1zM118,79h1v1h-1zM119,65h1v1h-1zM119,71h1v1h-1zM119,72h1v1h-1zM119,73h1v1h-1zM119,79h1v1h-1zM120,65h1v1h-1zM120,72h1v1h-1zM120,79h1v1h-1zM121,65h1v1h-1zM121,66h1v1h-1zM121,67h1v1h-1zM121,68h1v1h-1zM121,69h1v1h-1zM121,70h1v1h-1zM121,71h1v1h-1zM121,72h1v1h-1zM121,73h1v1h-1zM121,74h1v1h-1zM121,75h1v1h-1zM121,76h1v1h-1zM121,77h1v1h-1zM121,78h1v1h-1zM121,79h1v1h-1z"/>
<path fill="#fff" d="M144,68h1v1h-1zM144,69h1v1h-1zM144,70h1v1h-1zM145,67h1v1h-1zM145,68h1v1h-1zM145,70h1v1h-1zM146,66h1v1h-1zM146,67h1v1h-1zM146,69h1v1h-1zM146,70h1v1h-1zM146,71h1v1h-1zM146,72h1v1h-1zM146,73h1v1h-1zM146,74h1v1h-1zM146,75h1v1h-1zM147,66h1v1h-1zM147,75h1v1h-1zM148,66h1v1h-1zM148,67h1v1h-1zM148,68h1v1h-1zM148,69h1v1h-1zM148,70h1v1h-1zM148,71h1v1h-1zM148,72h1v1h-1zM148,73h1v1h-1zM148,74h1v1h-1zM148,75h1v1h-1zM149,66h1v1h-1zM149,67h1v1h-1zM149,74h1v1h-1zM149,75h1v1h-1zM150,66h1v1h-1zM150,68h1v1h-1zM150,69h1v1h-1zM150,70h1v1h-1zM150,71h1v1h-1zM150,72h1v1h-1zM150,73h1v1h-1zM150,75h1v1h-1zM151,66h1v1h-1zM151,67h1v1h-1zM151,74h1v1h-1zM151,75h1v1h-1zM152,67h1v1h-1zM152,68h1v1h-1zM152,69h1v1h-1zM152,70h1v1h-1zM152,71h1v1h-1zM152,72h1v1h-1zM152,73h1v1h-1zM152,74h1v1h-1zM153,66h1v1h-1zM153,67h1v1h-1zM153,74h1v1h-1zM153,75h1v1h-1zM154,66h1v1h-1zM154,68h1v1h-1zM154,69h1v1h-1zM154,70h1v1h-1zM154,71h1v1h-1zM154,72h1v1h-1zM154,73h1v1h-1zM154,75h1v1h-1zM155,66h1v1h-1zM155,67h1v1h-1zM155,74h1v1h-1zM155,75h1v1h-1zM156,66h1v1h-1zM156,67h1v1h-1zM156,68h1v1h-1zM156,69h1v1h-1zM156,70h1v1h-1zM156,71h1v1h-1zM156,72h1v1h-1zM156,73h1v1h-1zM156,74h1v1h-1zM156,75h1v1h-1zM157,66h1v1h-1zM157,69h1v1h-1zM157,70h1v1h-1zM157,71h1v1h-1zM157,72h1v1h-1zM157,75h1v1h-1zM158,66h1v1h-1zM158,67h1v1h-1zM158,68h1v1h-1zM158,69h1v1h-1zM158,70h1v1h-1zM158,73h1v1h-1zM158,74h1v1h-1zM158,75h1v1h-1zM159,66h1v1h-1zM159,67h1v1h-1zM159,68h1v1h-1zM159,71h1v1h-1zM159,72h1v1h-1zM159,73h1v1h-1zM159,74h1v1h-1zM159,75h1v1h-1zM160,66h1v1h-1zM160,69h1v1h-1zM160,70h1v1h-1zM160,71h1v1h-1zM160,72h1v1h-1zM160,75h1v1h-1zM161,66h1v1h-1zM161,67h1v1h-1zM161,68h1v1h-1zM161,69h1v1h-1zM161,72h1v1h-1zM161,73h1v1h-1zM161,74h1v1h-1zM161,75h1v1h-1z"/><path fill="#000" d="M145,69h1v1h-1zM146,68h1v1h-1zM147,67h1v1h-1zM147,68h1v1h-1zM147,69h1v1h-1zM147,70h1v1h-1zM147,71h1v1h-1zM147,72h1v1h-1zM147,73h1v1h-1zM147,74h1v1h-1zM149,68h1v1h-1zM149,69h1v1h-1zM149,70h1v1h-1zM149,71h1v1h-1zM149,72h1v1h-1zM149,73h1v1h-1zM150,67h1v1h-1zM150,74h1v1h-1zM151,68h1v1h-1zM151,69h1v1h-1zM151,70h1v1h-1zM151,71h1v1h-1zM151,72h1v1h-1zM151,73h1v1h-1zM153,68h1v1h-1zM153,69h1v1h-1zM153,70h1v1h-1zM153,71h1v1h-1zM153,72h1v1h-1zM153,73h1v1h-1zM154,67h1v1h-1zM154,74h1v1h-1zM155,68h1v1h-1zM155,69h1v1h-1zM155,70h1v1h-1zM155,71h1v1h-1zM155,72h1v1h-1zM155,73h1v1h-1zM157,67h1v1h-1zM157,68h1v1h-1zM157,73h1v1h-1zM157,74h1v1h-1zM158,71h1v1h-1zM158,72h1v1h-1zM159,69h1v1h-1zM159,70h1v1h-1zM160,67h1v1h-1zM160,68h1v1h-1zM160,73h1v1h-1zM160,74h1v1h-1z"/>
<g shape-rendering="geometricPrecision"><path d="M189.9,57.2 L209.8,77.6" stroke="#6f6f6f" stroke-width="1.1" fill="none"/><path d="M189,70.4 L209,59.4" stroke="#6f6f6f" stroke-width="1.1" fill="none"/><circle cx="198.2" cy="65" r="2.6" fill="#6f6f6f"/><path d="M227,73 L246,60" stroke="#6f6f6f" stroke-width="1.1" fill="none"/><circle cx="227" cy="73" r="2.3" fill="#6f6f6f"/><circle cx="246" cy="60" r="2.3" fill="#6f6f6f"/><path d="M263.7,72.9 L286,58.8" stroke="#6f6f6f" stroke-width="1.1" fill="none"/><circle cx="263.7" cy="72.9" r="2.3" fill="#6f6f6f"/><circle cx="274.9" cy="65.7" r="2.3" fill="#6f6f6f"/><circle cx="286" cy="58.8" r="2.3" fill="#6f6f6f"/><path d="M300.9,70 L324,62" stroke="#6f6f6f" stroke-width="1.1" fill="none"/><circle cx="300.9" cy="70" r="2.3" fill="#6f6f6f"/><path d="M318,59.3 L324,62 L320.6,67.5" stroke="#6f6f6f" stroke-width="1.1" fill="none"/><path d="M336.6,72.4 L360.6,57.7" stroke="#6f6f6f" stroke-width="1.1" fill="none"/><path d="M354.6,56.6 L360.6,57.7 L359.4,64" stroke="#6f6f6f" stroke-width="1.1" fill="none"/><path d="M342.5,74.6 L336.6,72.4 L339.3,66.2" stroke="#6f6f6f" stroke-width="1.1" fill="none"/><path d="M376.7,78.7 L399.9,63.9" stroke="#6f6f6f" stroke-width="1.1" fill="none"/><circle cx="376.7" cy="78.7" r="2.3" fill="#6f6f6f"/><circle cx="399.9" cy="63.9" r="2.3" fill="#6f6f6f"/><path d="M380.9,54.1 L396.9,78.4" stroke="#6f6f6f" stroke-width="1.1" fill="none"/><path d="M386.2,54.3 L380.9,54.1 L379.6,59.5" stroke="#6f6f6f" stroke-width="1.1" fill="none"/><path d="M391.6,77.5 L396.9,78.4 L398.5,73.4" stroke="#6f6f6f" stroke-width="1.1" fill="none"/><circle cx="385.9" cy="61.9" r="2.3" fill="#6f6f6f"/><path d="M388,65.7 L383.3,68.1 L385.6,72.8" stroke="#6f6f6f" stroke-width="1.1" fill="none"/><circle cx="425.9" cy="65.9" r="12.7" stroke="#6f6f6f" stroke-width="1.1" fill="none"/><circle cx="425.9" cy="65.9" r="2.3" fill="#6f6f6f"/><circle cx="436.9" cy="72.8" r="2.3" fill="#6f6f6f"/><path d="M452.8,75 C452,66 456,58 465.7,57.4 C470,57.4 474,60 476.1,63.7" stroke="#6f6f6f" stroke-width="1.1" fill="none"/><circle cx="452.8" cy="75" r="2.3" fill="#6f6f6f"/><circle cx="455.3" cy="61.7" r="2.3" fill="#6f6f6f"/><circle cx="476.1" cy="63.7" r="2.3" fill="#6f6f6f"/><path d="M495.6,74.9 L514.3,74.9" stroke="#6f6f6f" stroke-width="1.1" fill="none"/><path d="M505.1,55.6 L514.3,74.9" stroke="#6f6f6f" stroke-width="1.1" fill="none"/><circle cx="495.6" cy="74.9" r="2.3" fill="#6f6f6f"/><circle cx="514.3" cy="74.9" r="2.3" fill="#6f6f6f"/><circle cx="505.1" cy="55.6" r="2.3" fill="#6f6f6f"/><path d="M505.7,69.9 L494.1,62.7" stroke="#6f6f6f" stroke-width="1.1" fill="none"/><path d="M499.5,61.3 L494.1,62.7 L495.3,68.4" stroke="#6f6f6f" stroke-width="1.1" fill="none"/><circle cx="505.7" cy="69.9" r="1.3" fill="#6f6f6f"/><path d="M504.5,74.9 L504.8,70.5" stroke="#6f6f6f" stroke-width="1.1" fill="none"/><path d="M507.2,70.7 L511.3,73.4" stroke="#6f6f6f" stroke-width="1.1" fill="none"/><path d="M535.9,56.2 L537.7,59.8 L537.7,65.1 L538.5,66.5 L539.5,67.8 L541.6,73.1 L545.4,76.4 L551,76.4 L552.8,74.9 L553.4,71 L548.7,66 L541,65.4 L538.5,66.5 L534.4,67.5 L528.5,68.4 L526.4,66.3 L526.4,61 L530.3,56.2 L535.9,56.2" stroke="#6f6f6f" stroke-width="1.1" fill="none"/><circle cx="535.9" cy="57.7" r="2.3" fill="#6f6f6f"/></g>
<g shape-rendering="geometricPrecision"><pattern id="pI" x="0" y="0" width="2" height="2" patternUnits="userSpaceOnUse"><rect width="2" height="2" fill="#fff"/><rect x="0" y="0" width="1" height="1" fill="#777"/><rect x="1" y="1" width="1" height="1" fill="#777"/></pattern><path d="M578.8,57.7 L596.9,53.6 L587.7,67.2 L594.8,78.7 L577.6,76.7 Z" fill="url(#pI)" stroke="#6f6f6f" stroke-width="1.0"/><circle cx="578.8" cy="57.7" r="2.2" fill="#6f6f6f"/><circle cx="596.9" cy="53.6" r="2.2" fill="#6f6f6f"/><circle cx="587.7" cy="67.2" r="2.2" fill="#6f6f6f"/><circle cx="594.8" cy="78.7" r="2.2" fill="#6f6f6f"/><circle cx="577.6" cy="76.7" r="2.2" fill="#6f6f6f"/><path d="M616.2,76.1 L616.2,65.4 L618.3,61.3 L624.8,55.3 L628.4,53.6 L634.6,52.7 L634.9,72 Z" fill="url(#pI)" stroke="none" stroke-width="1.0"/><path d="M616.5,76.5 L616.5,65.4 C617,60 623,54 634.9,52.5" fill="none" stroke="#6f6f6f" stroke-width="2"/><path d="M654.5,77.8 L651.5,69 L652.5,62 L657,58 L660,56.5 L668.4,56.5 L676.8,64.4 Z" fill="url(#pI)" stroke="none" stroke-width="1.0"/><path d="M654.5,78 C650,72 651,62 656,58.5 C660,55.5 670,55 676.8,64.4" fill="none" stroke="#6f6f6f" stroke-width="2"/><circle cx="702.7" cy="66.4" r="13" fill="url(#pI)" stroke="#6f6f6f" stroke-width="1.1"/><circle cx="19.9" cy="112.8" r="2.2" fill="#6f6f6f"/><path d="M19.9,112.8 L19.3,101.8" stroke="#6f6f6f" stroke-width="1.1" fill="none"/><path d="M22.9,97.2 L19,101.6 L23.8,105.6" stroke="#6f6f6f" stroke-width="1.1" fill="none"/><path d="M19,101.6 L24.6,100.6" stroke="#6f6f6f" stroke-width="1.1" fill="none"/><text x="29.6" y="104" font-size="10.5" fill="#7a7a7a" font-family="Liberation Sans" text-anchor="middle" letter-spacing="0">8</text><path d="M36.3,98.3 L41.8,98" stroke="#6f6f6f" stroke-width="1.1" fill="none"/><path d="M37.1,94.2 L41.8,98 L39.3,102.5" stroke="#6f6f6f" stroke-width="1.1" fill="none"/><path d="M41.8,98 L43.4,106" stroke="#6f6f6f" stroke-width="1.1" fill="none"/><circle cx="44.1" cy="108.9" r="2.2" fill="#6f6f6f"/><circle cx="57.9" cy="112.9" r="2.2" fill="#6f6f6f"/><circle cx="82.2" cy="108.7" r="2.2" fill="#6f6f6f"/><path d="M57.9,112.9 L66.8,111.4 L72.7,111.1 L79,110.2 L82.2,108.7" stroke="#6f6f6f" stroke-width="1.1" fill="none"/><path d="M57.3,110.5 L57.3,101.6" stroke="#6f6f6f" stroke-width="1.1" fill="none"/><path d="M60.6,97.2 L56.9,101.3 L61.5,105.5" stroke="#6f6f6f" stroke-width="1.1" fill="none"/><path d="M56.9,101.3 L62.7,100.6" stroke="#6f6f6f" stroke-width="1.1" fill="none"/><text x="68.5" y="104" font-size="10.5" fill="#7a7a7a" font-family="Liberation Sans" text-anchor="middle" letter-spacing="0">8</text><path d="M74.5,98.4 L79.3,97.8" stroke="#6f6f6f" stroke-width="1.1" fill="none"/><path d="M75.4,94.2 L79.3,97.8 L77.5,102.5" stroke="#6f6f6f" stroke-width="1.1" fill="none"/><path d="M79.3,97.8 L81.3,105.8 L82.2,108.7" stroke="#6f6f6f" stroke-width="1.1" fill="none"/><circle cx="106.2" cy="104.1" r="15" fill="none" stroke="#6f6f6f" stroke-width="1.1"/><circle cx="106" cy="104" r="2.2" fill="#6f6f6f"/><path d="M106,104 L120.7,102" stroke="#6f6f6f" stroke-width="1.1" fill="none"/><path d="M116.3,98.3 L120.7,102 L118.3,106.3" stroke="#6f6f6f" stroke-width="1.1" fill="none"/><text x="111.6" y="102" font-size="10.5" fill="#7a7a7a" font-family="Liberation Sans" text-anchor="middle" letter-spacing="0">5</text><circle cx="130.7" cy="115" r="2.2" fill="#6f6f6f"/><circle cx="155" cy="115" r="2.2" fill="#6f6f6f"/><circle cx="139.9" cy="94.8" r="2.2" fill="#6f6f6f"/><path d="M130.7,115 L155,115" stroke="#6f6f6f" stroke-width="1.1" fill="none"/><path d="M130.7,115 L139.9,94.8" stroke="#6f6f6f" stroke-width="1.1" fill="none"/><path d="M136.7,103.7 L142.6,110 L142.6,115" stroke="#6f6f6f" stroke-width="1.1" fill="none"/><text x="147.6" y="107.3" font-size="10.5" fill="#7a7a7a" font-family="Liberation Sans" text-anchor="middle" letter-spacing="0">65</text><text x="158.5" y="102" font-size="9" fill="#7a7a7a" font-family="Liberation Sans" text-anchor="middle" letter-spacing="0">o</text><circle cx="170.7" cy="97.7" r="2.2" fill="#6f6f6f"/><circle cx="194.9" cy="94" r="2.2" fill="#6f6f6f"/><path d="M170.7,97.7 L194.9,94" stroke="#6f6f6f" stroke-width="1.1" fill="none"/><circle cx="171.7" cy="105.9" r="2.2" fill="#6f6f6f"/><circle cx="183.9" cy="103.7" r="2.2" fill="#6f6f6f"/><path d="M171.7,105.9 L183.9,103.7" stroke="#6f6f6f" stroke-width="1.1" fill="none"/><text x="186.3" y="119" font-size="10.5" fill="#7a7a7a" font-family="Liberation Sans" text-anchor="middle" letter-spacing="0">1:2</text><circle cx="220" cy="93.7" r="2.2" fill="#6f6f6f"/><circle cx="208.7" cy="115.7" r="2.2" fill="#6f6f6f"/><path d="M208.7,115.7 L220,93.7" stroke="#6f6f6f" stroke-width="1.1" fill="none"/><path d="M220.4,99.6 V116.6" stroke="#6f6f6f" stroke-width="1.1" stroke-dasharray="2,2" fill="none"/><path d="M215.3,116.3 L217.8,116.3" stroke="#6f6f6f" stroke-width="1.1" fill="none"/><text x="229" y="111.2" font-size="10.5" fill="#7a7a7a" font-family="Liberation Sans" text-anchor="middle" letter-spacing="0">2:1</text><path d="M244.7,93.7 L265.3,90.7 L268.7,103 L257.7,100 L246.7,107.3 Z" fill="url(#pI)" stroke="#6f6f6f" stroke-width="1.0"/><circle cx="244.7" cy="93.7" r="2.2" fill="#6f6f6f"/><circle cx="265.3" cy="90.7" r="2.2" fill="#6f6f6f"/><circle cx="268.7" cy="103" r="2.2" fill="#6f6f6f"/><circle cx="257.7" cy="100" r="2.2" fill="#6f6f6f"/><circle cx="246.7" cy="107.3" r="2.2" fill="#6f6f6f"/><text x="255.5" y="119.5" font-size="10.5" fill="#7a7a7a" font-family="Liberation Sans" text-anchor="middle" letter-spacing="0">3 cm</text><text x="271.5" y="114.7" font-size="10.5" fill="#7a7a7a" font-family="Liberation Sans" text-anchor="middle" letter-spacing="0">2</text><text x="308.2" y="108.5" font-size="15" fill="#7a7a7a" font-family="Liberation Sans" text-anchor="middle" letter-spacing="0">x+y</text><circle cx="343.7" cy="111.8" r="1.8" fill="#6f6f6f"/><path d="M343.7,111.8 L367.5,97.4" stroke="#6f6f6f" stroke-width="2" fill="none"/><path d="M353.7,95.7 L367.5,97.4 L365,112.3" stroke="#6f6f6f" stroke-width="2" fill="none"/><path d="M382.4,117.3 L404,91.9" stroke="#6f6f6f" stroke-width="3" stroke-linecap="round"/><circle cx="456.7" cy="113.8" r="2.2" fill="#6f6f6f"/><circle cx="469.9" cy="92.7" r="2.2" fill="#6f6f6f"/><circle cx="483.1" cy="115.7" r="2.2" fill="#6f6f6f"/><path d="M456.7,113.8 L469.9,92.7" stroke="#6f6f6f" stroke-width="1.1" fill="none"/><path d="M456.7,113.8 L483.1,115.7" stroke="#6f6f6f" stroke-width="1.4" fill="none"/><path d="M464,103.7 L469,114.4" stroke="#6f6f6f" stroke-width="2" fill="none"/><path d="M465.2,112.4 L469,114.4 L472.8,110.5" stroke="#6f6f6f" stroke-width="1.4" fill="none"/><circle cx="496" cy="94.3" r="1.8" fill="#6f6f6f"/><circle cx="510" cy="91.3" r="2.2" fill="#6f6f6f"/><path d="M496,94.3 L504,94 L510,91.3" stroke="#6f6f6f" stroke-width="1.4" fill="none"/><path d="M496,94.3 L496,112.7" stroke="#6f6f6f" stroke-width="2" fill="none"/><path d="M504,94 L507.6,113.5" stroke="#6f6f6f" stroke-width="2" fill="none"/><path d="M510,91.3 L521,116" stroke="#6f6f6f" stroke-width="2" fill="none"/><path d="M494.7,112.7 L507,114 L521,116.2" stroke="#6f6f6f" stroke-width="1.4" fill="none"/><path d="M493.5,108.5 L496,113 L498.8,109" stroke="#6f6f6f" stroke-width="1.6" fill="none"/><path d="M504,110 L507.6,113.5 L510.5,110.5" stroke="#6f6f6f" stroke-width="1.6" fill="none"/><path d="M517,113.5 L521,116.5 L522,111.5" stroke="#6f6f6f" stroke-width="1.6" fill="none"/><path d="M540.2,117.5 L544.6500000000001,108 L549.1,117.5" stroke="#6f6f6f" stroke-width="1.0" fill="none"/><path d="M541.98,113.7 L547.32,113.7" stroke="#6f6f6f" stroke-width="1.0" fill="none"/><path d="M549.1,108.6 L558.6,102.3" stroke="#6f6f6f" stroke-width="1.1" fill="none"/><path d="M552.3,101.2 L558.6,102.3 L557.5,108.6" stroke="#6f6f6f" stroke-width="1.1" fill="none"/><path d="M562.2,100.7 L566.4000000000001,90.7 L570.6,100.7" stroke="#6f6f6f" stroke-width="1.0" fill="none"/><path d="M563.8800000000001,96.7 L568.9200000000001,96.7" stroke="#6f6f6f" stroke-width="1.0" fill="none"/><path d="M590,90.7 L594.5,100.7 L599,90.7" stroke="#6f6f6f" stroke-width="1.0" fill="none"/><path d="M591.8,94.7 L597.2,94.7" stroke="#6f6f6f" stroke-width="1.0" fill="none"/><path d="M583.2,104.4 L604.7,104.4" stroke="#6f6f6f" stroke-width="1.1" fill="none"/><path d="M590,117.5 L594.5,108 L599,117.5" stroke="#6f6f6f" stroke-width="1.0" fill="none"/><path d="M591.8,113.7 L597.2,113.7" stroke="#6f6f6f" stroke-width="1.0" fill="none"/><path d="M618.8,114.9 L623.55,104.9 L628.3,114.9" stroke="#6f6f6f" stroke-width="1.0" fill="none"/><path d="M620.6999999999999,110.9 L626.4,110.9" stroke="#6f6f6f" stroke-width="1.0" fill="none"/><path d="M629.3,107 L632.2,100.7 L635.1,107" stroke="#6f6f6f" stroke-width="1.0" fill="none"/><path d="M630.46,104.48 L633.94,104.48" stroke="#6f6f6f" stroke-width="1.0" fill="none"/><circle cx="643" cy="96" r="1.9" fill="#6f6f6f"/><circle cx="668.1" cy="102.8" r="1.9" fill="#6f6f6f"/><path d="M664,120.1 L668.45,110.1 L672.9,120.1" stroke="#6f6f6f" stroke-width="1.0" fill="none"/><path d="M665.78,116.1 L671.12,116.1" stroke="#6f6f6f" stroke-width="1.0" fill="none"/><path d="M678.1,90.2 L673.4,98.6 L683.9,96.3" stroke="#6f6f6f" stroke-width="1.1" fill="none"/></g>
<path fill="#f0f" d=""/>
<path fill="#ff0" d="M429,99h6v1h-6zM427,100h10v1h-10zM427,101h10v1h-10zM426,102h12v6h-12zM427,108h10v1h-10zM427,109h10v1h-10zM429,110h6v1h-6z"/>
<path fill="#fff" d="M429,101h6v1h-6zM428,102h8v6h-8zM429,108h6v1h-6z"/>
<path fill="#000" d="M431,103h2v1h-2zM430,104h4v2h-4zM431,106h2v1h-2z"/>
<!--/ICONS-->
</svg>
<div class="t menu" style="left:7px">File</div>
<div class="t menu" style="left:35px">Edit</div>
<div class="t menu" style="left:66px">View</div>
<div class="t menu" style="left:99px">New</div>
<div class="t menu" style="left:131px">Measure</div>
<div class="t menu" style="left:185px;letter-spacing:0.6px">Transform</div>
<div class="t menu" style="left:248px">Play</div>
<div class="t menu" style="left:279px">Help</div>
<div class="t" style="left:24px;top:8px;font-size:11px;letter-spacing:0.5px;font-weight:bold;color:#fff;transform:scaleX(1.18);transform-origin:0 0">kseg: /home/tosha/kseg/morley.seg*</div>
<div class="t" style="left:8px;top:519px;font-size:11px;letter-spacing:0.3px;color:#000">Select Polygon P2</div>
<div class="t" style="left:634px;top:520px;font-size:11px;letter-spacing:0.65px;color:#000">Zoom: 100%</div>
</body></html>
